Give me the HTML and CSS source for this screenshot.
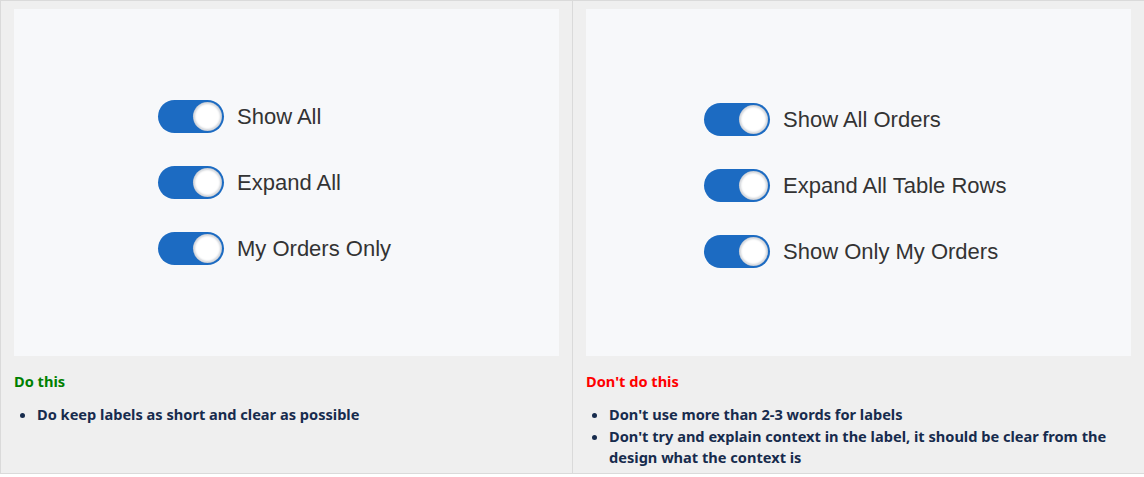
FILE: index.html
```html
<!DOCTYPE html>
<html>
<head>
<meta charset="utf-8">
<link rel="stylesheet" href="styles.css">
</head>
<body>
<div class="wrap">
  <section class="panel">
    <div class="demo demo-do">
      <div class="row"><span class="toggle"><span class="knob"></span></span><span class="label">Show All</span></div>
      <div class="row"><span class="toggle"><span class="knob"></span></span><span class="label">Expand All</span></div>
      <div class="row"><span class="toggle"><span class="knob"></span></span><span class="label">My Orders Only</span></div>
    </div>
    <h3 class="head head-do">Do this</h3>
    <ul class="notes">
      <li>Do keep labels as short and clear as possible</li>
    </ul>
  </section>
  <section class="panel panel-right">
    <div class="demo demo-dont">
      <div class="row"><span class="toggle"><span class="knob"></span></span><span class="label">Show All Orders</span></div>
      <div class="row"><span class="toggle"><span class="knob"></span></span><span class="label">Expand All Table Rows</span></div>
      <div class="row"><span class="toggle"><span class="knob"></span></span><span class="label">Show Only My Orders</span></div>
    </div>
    <h3 class="head head-dont">Don't do this</h3>
    <ul class="notes">
      <li>Don't use more than 2-3 words for labels</li>
      <li>Don't try and explain context in the label, it should be clear from the design what the context is</li>
    </ul>
  </section>
</div>
</body>
</html>
```
FILE: styles.css
```css
html, body {
  margin: 0;
  padding: 0;
  background: #ffffff;
}
.wrap {
  display: grid;
  grid-template-columns: 571px 571px;
  column-gap: 1px;
  width: 1144px;
  height: 472px;
  box-sizing: content-box;
  border-top: 1px solid #dadada;
  border-bottom: 1px solid #dadada;
  border-left: 1px solid #dadada;
  background: #dadada;
  font-family: "Noto Sans", "Open Sans", sans-serif;
}
.panel {
  background: #efefef;
  padding: 8px 13px 0 13px;
  display: flex;
  flex-direction: column;
}
.demo {
  height: 347px;
  background: #f7f8fa;
  box-sizing: border-box;
  display: flex;
  flex-direction: column;
  gap: 33px;
}
.demo-do {
  padding: 91px 0 0 144px;
}
.demo-dont {
  padding: 94px 0 0 118px;
}
.row {
  display: flex;
  align-items: center;
  gap: 13px;
  height: 33px;
}
.toggle {
  width: 66px;
  height: 33px;
  border-radius: 17px;
  background: #1c6bc2;
  display: flex;
  align-items: center;
  justify-content: flex-end;
  padding-right: 3px;
  box-sizing: border-box;
  flex: none;
}
.knob {
  width: 27px;
  height: 27px;
  border-radius: 50%;
  background: #ffffff;
  box-shadow: 0 0 0 1px #c9ced6, inset 0 0 2px 1px #d0d3d8;
}
.label {
  font-family: "Liberation Sans", Arial, sans-serif;
  font-size: 22px;
  color: #333333;
}
.head {
  margin: 16px 0 0 0;
  font-size: 14.6px;
  line-height: 19px;
  font-weight: 700;
}
.head-do { color: #008000; }
.head-dont { color: #ff0000; }
.notes {
  margin: 13px 0 0 0;
  padding-left: 23px;
  font-size: 14.6px;
  line-height: 21.5px;
  font-weight: 700;
  color: #172b4d;
}
```
